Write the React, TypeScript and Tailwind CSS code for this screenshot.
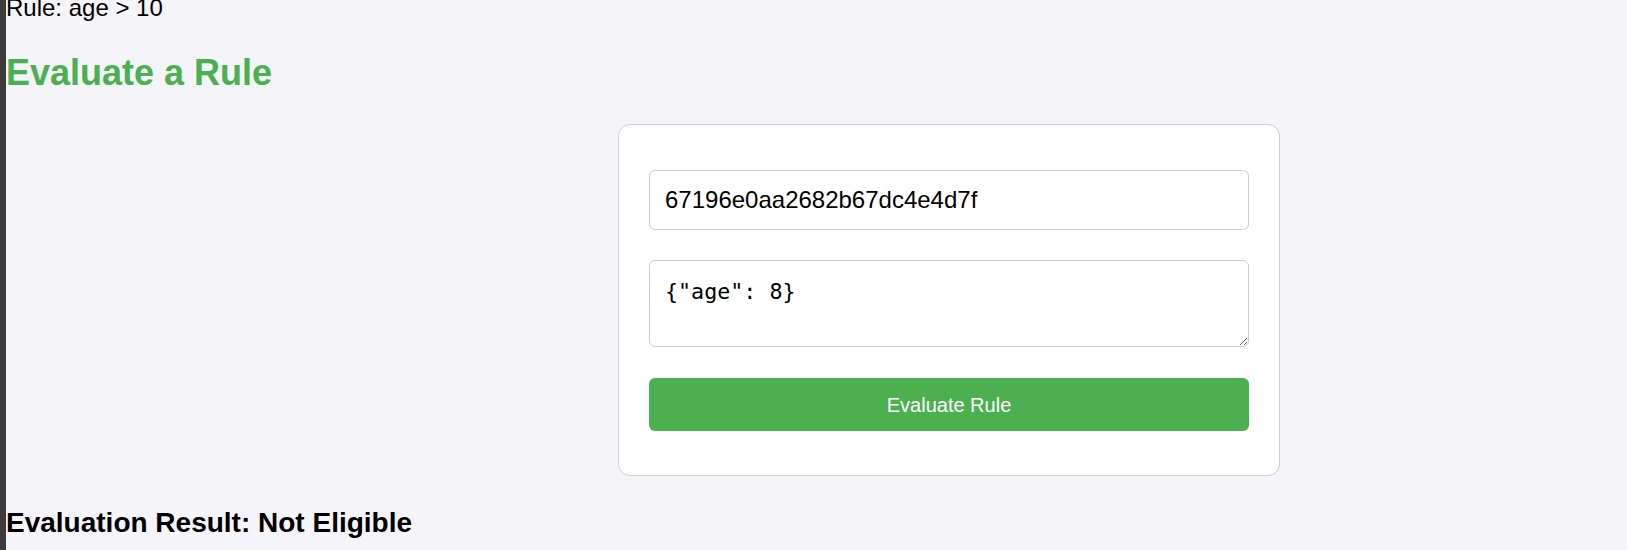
import { useState } from "react";

export default function App() {
  const [ruleId, setRuleId] = useState("67196e0aa2682b67dc4e4d7f");
  const [data, setData] = useState('{"age": 8}');
  const [result] = useState("Not Eligible");

  return (
    <div className="flex h-[550px] w-full overflow-hidden bg-[#f4f4f9] font-['Liberation_Sans',Arial,sans-serif] text-black">
      <div className="w-[6px] shrink-0 bg-[#3b3b3b]" />
      <div className="flex-1">
        <p className="mt-[-6px] text-[24px] leading-[28px]">Rule: age &gt; 10</p>
        <h2 className="mt-[30px] text-[36px] font-bold leading-[41px] text-[#4caf50]">Evaluate a Rule</h2>

        <div className="ml-[612px] mt-[31px] w-[662px] rounded-[12px] border border-[#cfcfcf] bg-white px-[30px] pb-[44px] pt-[45px]">
          <form className="flex flex-col" onSubmit={(e) => e.preventDefault()}>
            <input
              value={ruleId}
              onChange={(e) => setRuleId(e.target.value)}
              className="h-[60px] w-full rounded-[6px] border border-[#cccccc] bg-white px-[15px] text-[24px] text-black outline-none"
            />
            <textarea
              value={data}
              onChange={(e) => setData(e.target.value)}
              className="mt-[30px] h-[87px] w-full rounded-[6px] border border-[#cccccc] bg-white px-[15px] pt-[17px] font-['DejaVu_Sans_Mono',monospace] text-[21.7px] leading-[27px] text-black outline-none"
            />
            <button
              type="submit"
              className="mt-[31px] h-[53px] w-full rounded-[6px] bg-[#4caf50] text-[20px] text-white"
            >
              Evaluate Rule
            </button>
          </form>
        </div>

        <h3 className="mt-[31px] text-[28px] font-bold leading-[32px]">Evaluation Result: {result}</h3>
      </div>
    </div>
  );
}
